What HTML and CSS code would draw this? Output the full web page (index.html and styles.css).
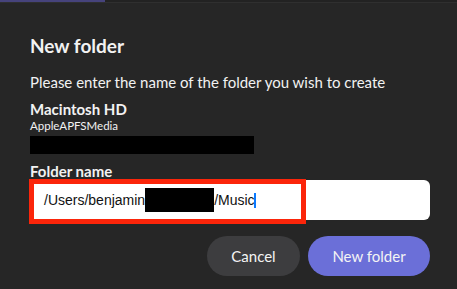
FILE: index.html
```html
<!DOCTYPE html>
<html lang="en">
<head>
<meta charset="utf-8">
<title>New folder</title>
<link rel="stylesheet" href="styles.css">
</head>
<body>
<div class="topbar"><div class="tab"></div></div>
<div class="dialog">
  <h1 class="title">New folder</h1>
  <p class="prompt">Please enter the name of the folder you wish to create</p>
  <div class="volume">Macintosh HD</div>
  <div class="media">AppleAPFSMedia</div>
  <div class="redact-bar"></div>
  <div class="label">Folder name</div>
  <div class="field">
    <div class="field-input">/Users/benjamin<span class="redact-inline"></span>/Music<span class="caret"></span></div>
    <div class="highlight"></div>
  </div>
  <div class="actions">
    <button class="btn btn-cancel">Cancel</button>
    <button class="btn btn-primary">New folder</button>
  </div>
</div>
</body>
</html>
```

FILE: styles.css
```css
* { box-sizing: border-box; }
html, body { margin: 0; padding: 0; }
body {
  width: 457px;
  height: 289px;
  overflow: hidden;
  background: #262626;
  color: #f2f2f2;
  font-family: Lato, "Open Sans", sans-serif;
}
.topbar {
  height: 3px;
  background: #222;
  border-bottom: 1px solid #2f2f2f;
  display: flex;
}
.tab {
  width: 105px;
  height: 2px;
  background: #46437c;
}
.dialog {
  padding: 0 27px 0 30px;
  display: flex;
  flex-direction: column;
}
.title {
  margin: 31px 0 0;
  font-size: 19px;
  line-height: 23px;
  font-weight: 700;
}
.prompt {
  margin: 16px 0 0;
  font-size: 15px;
  line-height: 18px;
}
.volume {
  margin-top: 9px;
  font-size: 15px;
  line-height: 18px;
  font-weight: 700;
}
.media {
  margin-top: 1px;
  font-size: 11.5px;
  line-height: 13px;
}
.redact-bar {
  margin-top: 4px;
  width: 224px;
  height: 18px;
  background: #000;
}
.label {
  margin-top: 8px;
  font-size: 15px;
  line-height: 18px;
  font-weight: 700;
}
.field {
  position: relative;
  height: 40px;
}
.field-input {
  height: 40px;
  background: #fff;
  border-radius: 6px;
  padding-left: 14px;
  display: flex;
  align-items: center;
  color: #111;
  font-family: "Liberation Sans", Arial, sans-serif;
  font-size: 14px;
  white-space: nowrap;
}
.redact-inline {
  display: inline-block;
  width: 69px;
  height: 24px;
  background: #000;
}
.caret {
  display: inline-block;
  width: 2px;
  height: 15px;
  margin-left: -1px;
  background: #0a7aff;
}
.highlight {
  position: absolute;
  left: -1px;
  top: -1px;
  width: 277px;
  height: 45px;
  border: 5px solid #fb250a;
}
.actions {
  margin-top: 16px;
  display: flex;
  justify-content: flex-end;
  gap: 8px;
}
.btn {
  height: 40px;
  border: none;
  border-radius: 20px;
  padding: 0;
  white-space: nowrap;
  font-family: Lato, "Open Sans", sans-serif;
  font-size: 15px;
  color: #f4f4f4;
}
.btn-cancel { background: #3d3d3f; width: 93px; }
.btn-primary { background: #6b6fd8; width: 122px; }
```
